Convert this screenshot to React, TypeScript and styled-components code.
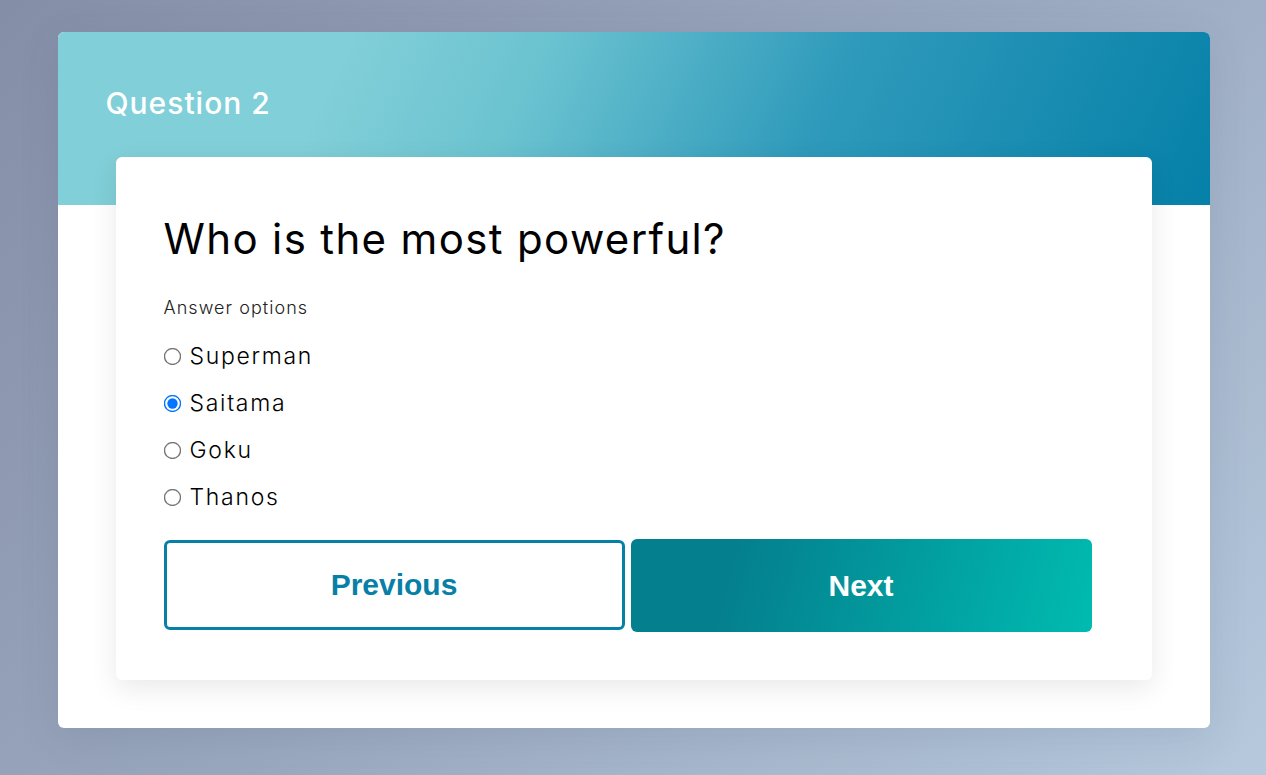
import React from "react";
import styled, { createGlobalStyle } from "styled-components";

const GlobalStyle = createGlobalStyle`
  html, body {
    margin: 0;
    padding: 0;
  }
  body {
    font-family: Inter, "Noto Sans", sans-serif;
    background: linear-gradient(135deg, #858ea7 0%, #9aa8bf 50%, #b6c9dd 100%);
    min-height: 100vh;
  }
`;

const Page = styled.main`
  min-height: 775px;
  box-sizing: border-box;
  padding: 32px 0 47px;
  display: flex;
  justify-content: center;
  align-items: flex-start;
`;

const Card = styled.section`
  width: 1152px;
  margin-left: 1px;
  background: #fff;
  border-radius: 6px;
  overflow: hidden;
  padding-bottom: 48px;
  box-shadow: 0 10px 40px rgba(60, 70, 100, 0.12);
`;

const Header = styled.header`
  height: 173px;
  box-sizing: border-box;
  padding: 51px 48px 0;
  background: linear-gradient(115deg, #81cfd8 24%, #6bc3d0 40%, #2f9abb 65%, #0580a8 100%);
`;

const HeaderTitle = styled.h1`
  margin: 0;
  color: #fff;
  font-weight: 500;
  font-size: 30px;
  line-height: 40px;
  letter-spacing: 1px;
`;

const Body = styled.div`
  margin: -48px 58px 0;
  background: #fff;
  border-radius: 6px;
  padding: 52px 60px 48px 48px;
  box-shadow: 0 8px 28px rgba(0, 0, 0, 0.09);
  position: relative;
`;

const QuestionText = styled.h2`
  margin: 0;
  font-size: 42px;
  font-weight: 400;
  line-height: 60px;
  color: #000;
  letter-spacing: 1.35px;
`;

const Label = styled.p`
  margin: 27px 0 21px;
  font-size: 18px;
  line-height: 24px;
  color: #222;
  font-weight: 300;
  letter-spacing: 1.05px;
`;

const Options = styled.div`
  display: flex;
  flex-direction: column;
  gap: 17px;
`;

const Option = styled.label`
  display: flex;
  align-items: center;
  height: 30px;
  font-size: 23px;
  font-weight: 300;
  color: #000;
  letter-spacing: 1.7px;
  cursor: pointer;
`;

const Radio = styled.input`
  width: 13px;
  height: 13px;
  margin: 0 11px 0 2px;
  transform: scale(1.33);
  accent-color: #0075ff;
`;

const Buttons = styled.div`
  display: grid;
  grid-template-columns: 1fr 1fr;
  gap: 6px;
  margin-top: 27px;
  align-items: start;
`;

const Button = styled.button<{ $primary?: boolean }>`
  font-family: "Liberation Sans", Arial, sans-serif;
  font-weight: 700;
  font-size: 30px;
  border-radius: 6px;
  cursor: pointer;
  box-sizing: border-box;
  height: ${(p) => (p.$primary ? "93px" : "90px")};
  margin-top: ${(p) => (p.$primary ? "0" : "1px")};
  color: ${(p) => (p.$primary ? "#fff" : "#0780a8")};
  border: ${(p) => (p.$primary ? "none" : "3px solid #0780a8")};
  background: ${(p) =>
    p.$primary
      ? "linear-gradient(105deg, #047f8e 22%, #00bbb0 100%)"
      : "#fff"};
`;

const options = ["Superman", "Saitama", "Goku", "Thanos"];

export default function App() {
  return (
    <>
      <GlobalStyle />
      <Page>
        <Card>
          <Header>
            <HeaderTitle>Question 2</HeaderTitle>
          </Header>
          <Body>
            <QuestionText>Who is the most powerful?</QuestionText>
            <Label>Answer options</Label>
            <Options>
              {options.map((o) => (
                <Option key={o}>
                  <Radio type="radio" name="answer" defaultChecked={o === "Saitama"} />
                  {o}
                </Option>
              ))}
            </Options>
            <Buttons>
              <Button type="button">Previous</Button>
              <Button type="button" $primary>
                Next
              </Button>
            </Buttons>
          </Body>
        </Card>
      </Page>
    </>
  );
}
